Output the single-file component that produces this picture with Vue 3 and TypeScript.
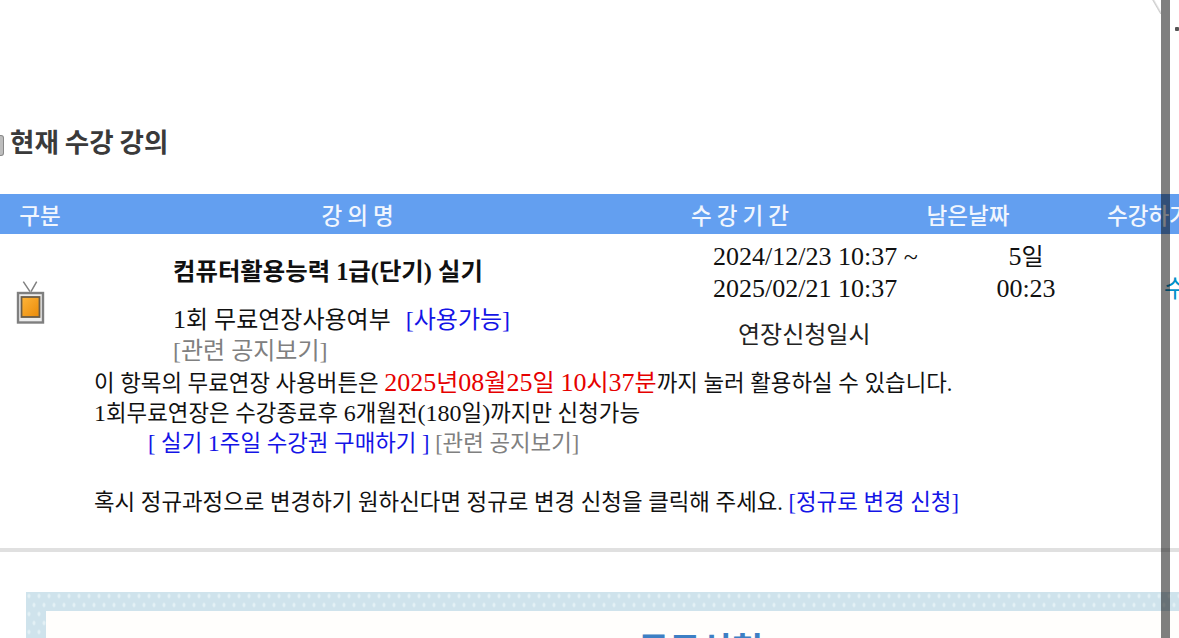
<script setup lang="ts">
const headers: { label: string; cls: string }[] = [
  { label: '구분', cls: 'c1' },
  { label: '강 의 명', cls: 'c2' },
  { label: '수 강 기 간', cls: 'c3' },
  { label: '남은날짜', cls: 'c4' },
  { label: '수강하기', cls: 'c5' },
]
</script>

<template>
  <div class="page">
    <h2 class="title"><span class="bullet"></span>현재 수강 강의</h2>

    <div class="head">
      <div v-for="h in headers" :key="h.label" :class="['hcell', h.cls]">{{ h.label }}</div>
    </div>

    <div class="row">
      <div class="icon-col">
        <svg class="tv" width="29" height="44" viewBox="0 0 29 44">
          <defs>
            <linearGradient id="tvscreen" x1="0" y1="0" x2="1" y2="1">
              <stop offset="0" stop-color="#ffb53a" />
              <stop offset="1" stop-color="#e98a08" />
            </linearGradient>
          </defs>
          <path d="M7.3 .7L14 10.7M20.7 .7L15 10.7" stroke="#808080" stroke-width="1.5" fill="none" />
          <rect x="2" y="12" width="25" height="29.5" fill="#ececec" stroke="#7f7f7f" stroke-width="2.4" />
          <rect x="5.5" y="16" width="18" height="20" fill="url(#tvscreen)" stroke="#6a5c48" stroke-width="1.8" />
        </svg>
      </div>
      <div class="course">
        <div class="course-name">컴퓨터활용능력 1급(단기) 실기</div>
        <div class="line-free"><span class="d">1</span>회 무료연장사용여부 &nbsp;<a class="blue use">[사용가능]</a></div>
        <div class="gray">[관련 공지보기]</div>
      </div>
      <div class="period">
        <div class="date">2024/12/23 10:37 ~</div>
        <div class="date">2025/02/21 10:37</div>
        <div class="ext">연장신청일시</div>
      </div>
      <div class="remain">
        <div><span class="d">5</span>일</div>
        <div class="date">00:23</div>
      </div>
      <div class="go">수강하기</div>
    </div>

    <div class="notes">
      <div>이 항목의 무료연장 사용버튼은 <span class="red"><span class="d">2025</span>년<span class="d">08</span>월<span class="d">25</span>일 <span class="d">10</span>시<span class="d">37</span>분</span>까지 눌러 활용하실 수 있습니다.</div>
      <div><span class="n">1</span>회무료연장은 수강종료후 <span class="n">6</span>개월전<span class="n">(180</span>일<span class="n">)</span>까지만 신청가능</div>
      <div class="buy"><a class="blue">[ 실기 <span class="n">1</span>주일 수강권 구매하기 ]</a> <span class="gray">[관련 공지보기]</span></div>
      <div class="change">혹시 정규과정으로 변경하기 원하신다면 정규로 변경 신청을 클릭해 주세요. <a class="blue">[정규로 변경 신청]</a></div>
    </div>

    <div class="rule"></div>

    <div class="box">
      <div class="box-inner">
        <div class="box-title">무료신청</div>
      </div>
    </div>

    <div class="scrollbar"></div>
    <div class="corner"></div>
    <div class="mark"></div>
  </div>
</template>

<style>
html, body { margin: 0; background: #fff; overflow: hidden; }
</style>

<style scoped>
.page {
  position: relative;
  width: 1179px;
  height: 638px;
  overflow: hidden;
  background: #fff;
  padding-top: 126px;
  box-sizing: border-box;
  font-family: "Liberation Serif", "Noto Sans CJK KR", serif;
  font-size: 24px;
  color: #111;
}
.d { font-size: 26px; line-height: 0; }
.n { font-size: 24px; line-height: 0; }
.date { font-size: 26px; }
.title {
  margin: 0;
  height: 30px;
  line-height: 30px;
  font-family: "Noto Sans CJK KR", sans-serif;
  font-size: 26.5px;
  font-weight: 700;
  color: #3a3a3a;
  display: flex;
  align-items: center;
}
.bullet {
  width: 4px;
  height: 21px;
  margin-right: 6px;
  margin-top: 8px;
  background: #bdbdbd;
  border: 1px solid #888;
  border-left: 0;
  border-radius: 0 3px 3px 0;
  box-sizing: border-box;
}
.head {
  margin-top: 38px;
  width: 1240px;
  height: 40px;
  background: #639ff0;
  display: flex;
  align-items: center;
  color: #f1f6fe;
  font-family: "Noto Sans CJK KR", sans-serif;
  font-size: 22.5px;
  font-weight: 500;
}
.hcell { text-align: center; white-space: nowrap; }
.c1 { width: 80px; }
.c2 { width: 555px; }
.c3 { width: 210px; }
.c4 { width: 246px; }
.c5 { width: 149px; padding-left: 16px; text-align: left; box-sizing: border-box; }
.row { display: flex; height: 136px; white-space: nowrap; }
.icon-col { width: 173px; flex: none; padding: 47px 0 0 16px; box-sizing: border-box; }
.tv { display: block; }
.course { width: 540px; flex: none; padding-top: 20px; box-sizing: border-box; }
.course-name {
  font-weight: 700;
  font-size: 24.4px;
  line-height: 36px;
  height: 50px;
}
.line-free { line-height: 32px; height: 32px; }
.blue { color: #1414e6; }
.use { margin-left: 3px; }
.gray { color: #808080; line-height: 30px; }
.period { width: 266px; flex: none; padding-top: 7px; box-sizing: border-box; line-height: 32px; }
.ext { margin: 14px 0 0 25px; color: #222; }
.remain { width: 94px; flex: none; padding-top: 7px; box-sizing: border-box; line-height: 32px; text-align: center; }
.go { flex: none; margin-left: 91px; padding-top: 35px; color: #0090c8; }
.notes { padding-left: 94px; margin-top: -1px; line-height: 30px; font-size: 22.4px; white-space: nowrap; }
.red { color: #e60000; font-size: 24px; line-height: 0; }
.buy { padding-left: 54px; }
.change { margin-top: 29px; }
.rule { margin-top: 30px; height: 4px; background: #e0e0e0; }
.box {
  margin: 40px 0 0 26px;
  width: 1200px;
  height: 200px;
  box-sizing: border-box;
  padding: 19px 0 0 20px;
  background-color: #cfe3ec;
  background-image:
    radial-gradient(ellipse 2px 3px at 3px 4px, #e3f0f5 40%, transparent 100%),
    radial-gradient(ellipse 2px 3px at 8px 13px, #e3f0f5 40%, transparent 100%);
  background-size: 10px 18px;
}
.box-inner { background: #fffefc; height: 100%; }
.box-title {
  padding-top: 17px;
  margin-left: 592px;
  width: 140px;
  font-family: "Noto Sans CJK KR", sans-serif;
  font-weight: 700;
  font-size: 34px;
  line-height: 40px;
  color: #3d7fc4;
  white-space: nowrap;
}
.scrollbar {
  position: absolute;
  top: 0;
  left: 1161px;
  width: 9px;
  height: 638px;
  background: rgba(0, 0, 0, 0.5);
}
.corner {
  position: absolute;
  top: 0;
  left: 1152px;
  width: 9px;
  height: 14px;
  background: linear-gradient(60deg, transparent 45%, #ccc 52%, transparent 65%);
}
.mark {
  position: absolute;
  top: 27px;
  left: 1175px;
  width: 4px;
  height: 4px;
  background: #555;
  border-radius: 1px;
}
</style>
